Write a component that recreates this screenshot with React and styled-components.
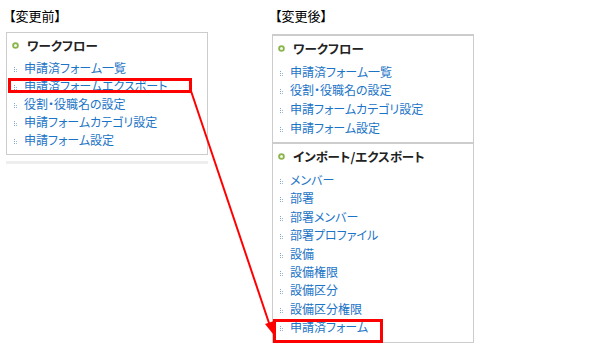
import styled, { createGlobalStyle } from 'styled-components';

const Global = createGlobalStyle`
  body {
    margin: 0;
    background: #ffffff;
    font-family: "Noto Sans CJK JP", "Noto Sans", sans-serif;
  }
`;

const before = [
  { label: '申請済フォーム一覧' },
  { label: '申請済フォームエクスポート', mark: 'before' },
  { label: '役割・役職名の設定' },
  { label: '申請フォームカテゴリ設定' },
  { label: '申請フォーム設定' },
];

const afterWorkflow = [
  { label: '申請済フォーム一覧' },
  { label: '役割・役職名の設定' },
  { label: '申請フォームカテゴリ設定' },
  { label: '申請フォーム設定' },
];

const afterImport = [
  { label: 'メンバー' },
  { label: '部署' },
  { label: '部署メンバー' },
  { label: '部署プロファイル' },
  { label: '設備' },
  { label: '設備権限' },
  { label: '設備区分' },
  { label: '設備区分権限' },
  { label: '申請済フォーム', mark: 'after' },
];

function Dots() {
  return (
    <Bullet width="5" height="6" viewBox="0 0 5 6">
      <rect x="0" y="1" width="1" height="1" fill="#7fa6cf" />
      <rect x="0" y="3" width="1" height="1" fill="#7fa6cf" />
      <rect x="0" y="5" width="1" height="1" fill="#7fa6cf" />
      <rect x="2" y="3" width="1" height="1" fill="#9dbbd9" />
      <rect x="2" y="5" width="1" height="1" fill="#9dbbd9" />
    </Bullet>
  );
}

function Ring() {
  return (
    <RingIcon width="7" height="7" viewBox="0 0 7 7">
      <circle cx="3.5" cy="3.5" r="2.4" fill="#f2f7ea" stroke="#8cb44c" strokeWidth="1.8" />
    </RingIcon>
  );
}

function MenuList({ items, step, top }) {
  return (
    <List $top={top}>
      {items.map(item => (
        <Item key={item.label} $step={step}>
          <Dots />
          <ItemText>{item.label}</ItemText>
          {item.mark && <Mark $kind={item.mark} />}
        </Item>
      ))}
    </List>
  );
}

export default function App() {
  return (
    <>
      <Global />
      <Page>
        <Column>
          <Caption>【変更前】</Caption>
          <Panel>
            <Section $first>
              <Header><Ring /><HeaderText>ワークフロー</HeaderText></Header>
              <MenuList items={before} step={18} top={1} />
            </Section>
          </Panel>
          <Shadow />
        </Column>
        <Column>
          <Caption>【変更後】</Caption>
          <Panel $after>
            <Section>
              <Header><Ring /><HeaderText>ワークフロー</HeaderText></Header>
              <MenuList items={afterWorkflow} step={18.6} top={2} />
            </Section>
            <Section>
              <Header><Ring /><HeaderText>インポート/エクスポート</HeaderText></Header>
              <MenuList items={afterImport} step={18.4} top={2} />
            </Section>
          </Panel>
        </Column>
        <Arrow width="606" height="349" viewBox="0 0 606 349">
          <line x1="191" y1="91" x2="270" y2="326" stroke="#ff0000" strokeWidth="2" />
          <polygon points="273,334 274,321 265,324" fill="#ff0000" />
        </Arrow>
      </Page>
    </>
  );
}

const Page = styled.div`
  position: relative;
  width: 606px;
  height: 349px;
  display: flex;
  gap: 64px;
  padding-left: 6px;
  box-sizing: border-box;
  overflow: hidden;
`;

const Column = styled.div`
  width: 202px;
  display: flex;
  flex-direction: column;
`;

const Caption = styled.div`
  height: 32px;
  padding: 8px 0 0 3px;
  box-sizing: border-box;
  font-size: 13px;
  font-weight: normal;
  line-height: 16px;
  color: #000;
  font-feature-settings: "palt";
`;

const Panel = styled.div`
  margin-top: ${p => (p.$after ? '2px' : '0')};
  border-left: 1px solid #cccccc;
  border-right: 1px solid #cccccc;
  border-bottom: 1px solid #cccccc;
`;

const Section = styled.div`
  border-top: ${p => (p.$first ? '1px' : '2px')} solid #cccccc;
  padding-bottom: 6px;
`;

const Header = styled.div`
  height: 24px;
  display: flex;
  align-items: center;
  padding-left: 5px;
  gap: 8px;
`;

const RingIcon = styled.svg`
  flex: none;
`;

const HeaderText = styled.span`
  font-size: 12.5px;
  font-weight: bold;
  color: #222;
  font-feature-settings: "palt";
`;

const List = styled.ul`
  list-style: none;
  margin: 0;
  padding: ${p => p.$top}px 0 0 0;
`;

const Item = styled.li`
  position: relative;
  height: ${p => p.$step}px;
  display: flex;
  align-items: center;
  padding-left: 7px;
`;

const Bullet = styled.svg`
  flex: none;
  margin-right: 5px;
  margin-top: 3px;
`;

const ItemText = styled.span`
  font-size: 12px;
  color: #1c74c6;
  font-feature-settings: "palt";
  white-space: nowrap;
`;

const Mark = styled.span`
  position: absolute;
  box-sizing: border-box;
  border: 3px solid #ff0000;
  left: ${p => (p.$kind === 'before' ? '1px' : '0')};
  top: ${p => (p.$kind === 'before' ? '2px' : '1px')};
  width: ${p => (p.$kind === 'before' ? '184px' : '110px')};
  height: ${p => (p.$kind === 'before' ? '15px' : '24px')};
`;

const Shadow = styled.div`
  margin-top: 6px;
  height: 3px;
  background: #eeeeee;
`;

const Arrow = styled.svg`
  position: absolute;
  left: 0;
  top: 0;
  pointer-events: none;
`;
